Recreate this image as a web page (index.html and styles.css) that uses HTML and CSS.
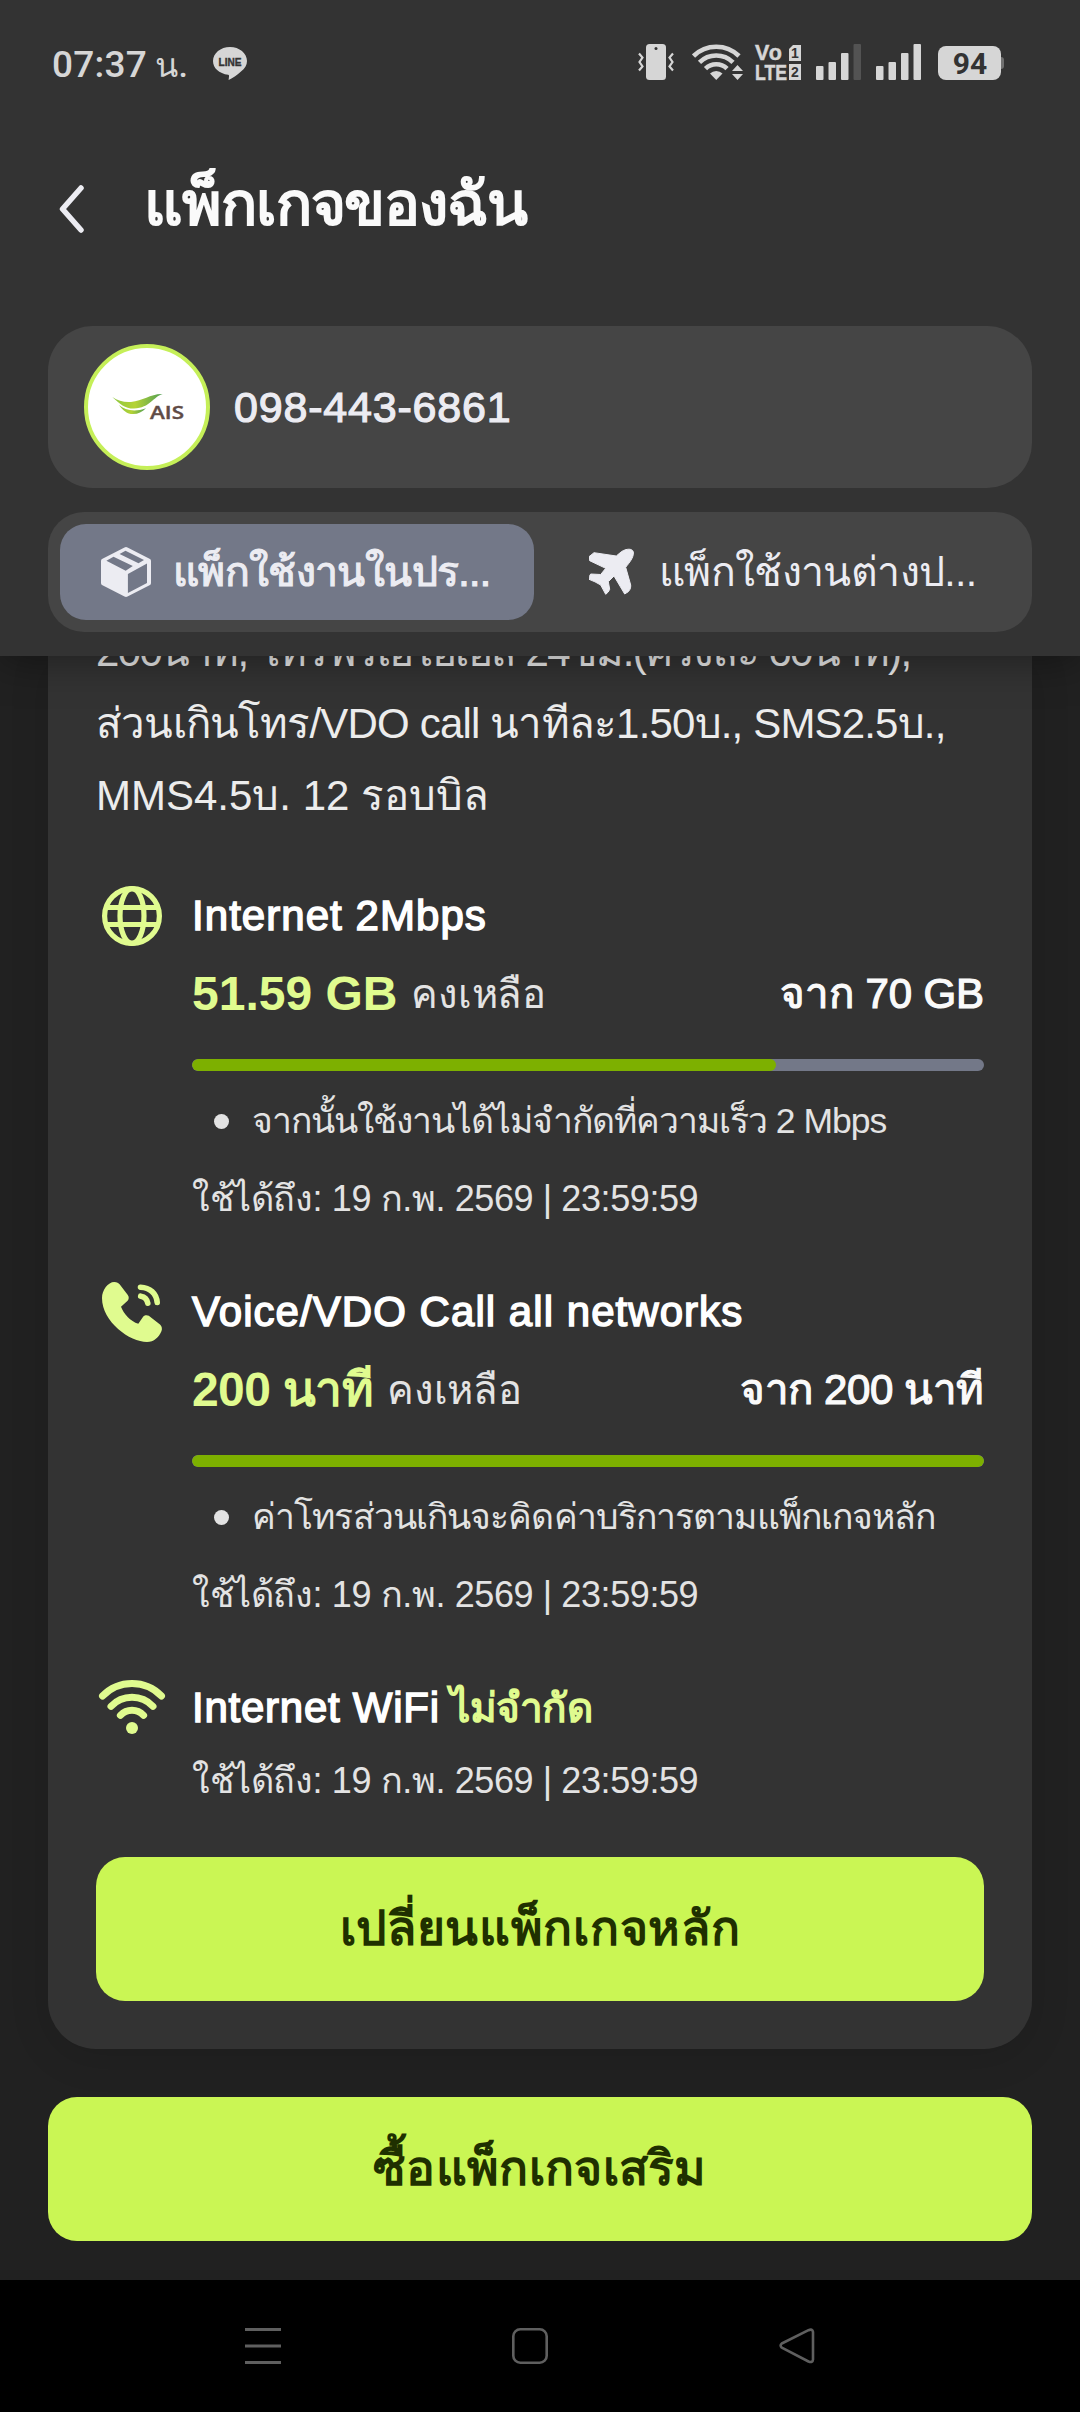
FILE: index.html
```html
<!DOCTYPE html>
<html lang="th">
<head>
<meta charset="utf-8">
<title>แพ็กเกจของฉัน</title>
<link rel="stylesheet" href="styles.css">
</head>
<body>
<div class="screen">
  <header class="header">
    <div class="status">
      <span class="clock">07:37 <span class="clock-unit">น.</span></span>
      <svg class="line-app" width="34" height="34" viewBox="0 0 34 34">
        <path d="M17 0C7.600 0 0 6.300 0 14c0 7 6 12.600 15.200 13.800.8.2.9.8.8 1.800L15.600 33c3.400-1.400 9-5 12.400-8.400C31.800 21.500 34 18 34 14 34 6.300 26.400 0 17 0z" fill="#d6d6d6"/>
        <text x="17" y="18.500" text-anchor="middle" textLength="23" lengthAdjust="spacingAndGlyphs" class="line-label">LINE</text>
      </svg>
      <div class="status-right">
        <svg width="36" height="36" viewBox="0 0 36 36" fill="none">
          <rect x="8" width="20" height="36" rx="3.500" fill="#d6d6d6"/>
          <circle cx="18" cy="4.500" r="1.500" fill="#333"/>
          <path d="M1 9.500l3.500 4L1.500 18l3 4.500L1 26.500M35 9.500l-3.500 4 3 4.500-3 4.500 3.500 4" stroke="#d6d6d6" stroke-width="2.200"/>
        </svg>
        <svg width="51" height="36" viewBox="0 0 51 36" fill="none">
          <g stroke="#d6d6d6" stroke-width="4.600">
            <path d="M1.500 12A32.500 32.500 0 0 1 47 12"/>
            <path d="M7.500 18.300A24 24 0 0 1 41 18.300"/>
            <path d="M13.500 24.600A15.300 15.300 0 0 1 35 24.600"/>
          </g>
          <path d="M18 29.500a9 9 0 0 1 12.500 0L24.250 36z" fill="#d6d6d6"/>
          <path d="M40 27l5.500-6 5.500 6zM40 30h11l-5.500 6z" fill="#d6d6d6"/>
        </svg>
        <svg class="volte-icon" width="46" height="36" viewBox="0 0 46 36">
          <text x="0" y="16" textLength="27" class="volte">Vo</text>
          <text x="0" y="35.500" textLength="32" lengthAdjust="spacingAndGlyphs" class="volte">LTE</text>
          <path d="M38 1h8v16H34V5zM34 20h12v16H34z" fill="#d6d6d6"/>
          <text x="40" y="14" class="volte-n">1</text>
          <text x="40" y="33" class="volte-n">2</text>
        </svg>
        <svg width="45" height="36" viewBox="0 0 45 36" fill="#d6d6d6">
          <rect y="22" width="7.500" height="14" rx="1"/><rect x="12.500" y="18" width="7.500" height="18" rx="1"/>
          <rect x="25" y="9" width="7.500" height="27" rx="1"/><rect x="37.500" width="7.500" height="36" rx="1" fill="#535353"/>
        </svg>
        <svg width="45" height="36" viewBox="0 0 45 36" fill="#d6d6d6">
          <rect y="22" width="7.500" height="14" rx="1"/><rect x="12.500" y="18" width="7.500" height="18" rx="1"/>
          <rect x="25" y="9" width="7.500" height="27" rx="1"/><rect x="37.500" width="7.500" height="36" rx="1"/>
        </svg>
        <svg width="66" height="36" viewBox="0 0 66 36">
          <rect x="58" y="13" width="8" height="12" rx="3" fill="#707070"/>
          <rect y="2" width="63" height="34" rx="8" fill="#d6d6d6"/>
          <text x="32" y="29.500" text-anchor="middle" class="battery">94</text>
        </svg>
      </div>
    </div>
    <div class="titlebar">
      <svg width="26" height="50" viewBox="0 0 26 50" fill="none" stroke="#ececf2" stroke-width="5.500" stroke-linecap="round" stroke-linejoin="round"><path d="M22 4L3.500 25 22 46"/></svg>
      <h1 class="title">แพ็กเกจของฉัน</h1>
    </div>
    <div class="number-card">
      <div class="avatar">
        <svg width="118" height="118" viewBox="4 4 118 118">
          <defs><linearGradient id="leaf"><stop offset="0" stop-color="#8cc63f"/><stop offset=".45" stop-color="#b5d335"/><stop offset="1" stop-color="#4f9e55"/></linearGradient></defs>
          <path d="M28.300 53C34 57 40 58.500 47 58c12-.8 20-8.500 31.700-7.900C70 52 66 64.300 50 64.600 41 64.700 36 60 28.300 53z" fill="url(#leaf)"/>
          <path d="M35 61c6 5 15 7.500 27 3.200C58 68 54 70.200 49 70.100 43 70 39 66.500 35 61z" fill="url(#leaf)"/>
          <text x="66" y="75.300" textLength="34" lengthAdjust="spacingAndGlyphs" class="ais">AIS</text>
        </svg>
      </div>
      <span class="number">098-443-6861</span>
    </div>
    <nav class="tabs">
      <div class="tab tab-active">
        <svg class="tab-icon" width="50" height="50" viewBox="0 0 50 50">
          <path d="M23.500.5q1.500-.8 3 0L49 12q1 .7 1 2v22q0 1.500-1 2L26.500 49.500q-1.500.8-3 0L1 38q-1-.7-1-2V14q0-1.300 1-2z" fill="#ececf2"/>
          <path d="M26.900 27L46 16.500V36L26.900 46zM24.500 3.800L43 13l-5.500 3.300L18.600 7zM12.500 9.700L31.800 19l-7.100 4.700L5.400 13.700z" fill="#737888"/>
        </svg>
        <span class="tab-text">แพ็กใช้งานในปร...</span>
      </div>
      <div class="tab">
        <svg class="tab-icon" width="50" height="50" viewBox="0 -2 50 50">
          <path d="M27.300 7C31 4 33 1.500 37 .6 41 -.4 44.500 .5 44.400 4c0 5-4 9.500-7.700 14.300L41.700 36c.3 3-1 5.500-2.400 6.700L35.700 45 25 27l-5.700 5.700 1.400 7.600q-1 3-4 5L11.700 36Q6 32.500 0 30.300 0 27 1.700 25l10 .5 5-6.200L.7 11.700Q-.5 9.500 0 7.700L5 3.700z" fill="#ececf2" stroke="#ececf2" stroke-linejoin="round"/>
        </svg>
        <span class="tab-text">แพ็กใช้งานต่างป...</span>
      </div>
    </nav>
  </header>

  <main class="content">
    <section class="card">
      <div class="desc">
        <div class="desc-1">200นาที, โทรฟรีเอไอเอส 24ชม.(ครั้งละ 60นาที),</div>
        <div class="desc-2">ส่วนเกินโทร/VDO call นาทีละ1.50บ., SMS2.5บ.,</div>
        <div>MMS4.5บ. 12 รอบบิล</div>
      </div>

      <article class="service">
        <svg class="service-icon" width="72" height="60" viewBox="0 0 72 60" fill="none" stroke="#e0fb8f" stroke-width="5.200">
          <circle cx="36" cy="30" r="27.400"/><ellipse cx="36" cy="30" rx="12" ry="27.400"/><path d="M9 21.500h54M9 38.500h54"/>
        </svg>
        <div class="service-body">
          <h2 class="service-name">Internet 2Mbps</h2>
          <div class="usage">
            <span class="left">51.59 GB</span><span class="remain">คงเหลือ</span><span class="total">จาก 70 GB</span>
          </div>
          <div class="bar"><div class="fill" style="width:73.7%"></div></div>
          <div class="note"><i class="dot"></i><span class="note-1">จากนั้นใช้งานได้ไม่จำกัดที่ความเร็ว 2 Mbps</span></div>
          <div class="valid">ใช้ได้ถึง: 19 ก.พ. 2569 | 23:59:59</div>
        </div>
      </article>

      <article class="service">
        <svg class="service-icon" width="72" height="60" viewBox="-6 0 72 60" fill="none">
          <path d="M12.300 0C15 0 16.500 1 17.800 2.600L25.800 13C27.200 15 27 17.200 25.600 18.800L19 24.700C21.500 31.500 28.500 39.500 36.300 41.700L41.300 34.600C42.700 33 45 32.700 46.800 33.800L58 42.500C60 44.500 60.500 47 59.300 49.500 57 55 52 60 45 60 28 60 0 40 0 16 0 8 6 0 12.300 0z" fill="#e0fb8f"/>
          <path d="M38.500 5.200C48 5.500 54.500 11.500 55.200 20.500M38.700 14.200C42.500 14.800 45.200 17.500 45.800 21.200" stroke="#e0fb8f" stroke-width="5.600" stroke-linecap="round"/>
        </svg>
        <div class="service-body">
          <h2 class="service-name">Voice/VDO Call all networks</h2>
          <div class="usage">
            <span class="left left-minutes">200 นาที</span><span class="remain">คงเหลือ</span><span class="total total-minutes">จาก 200 นาที</span>
          </div>
          <div class="bar"><div class="fill" style="width:100%"></div></div>
          <div class="note"><i class="dot"></i><span class="note-2">ค่าโทรส่วนเกินจะคิดค่าบริการตามแพ็กเกจหลัก</span></div>
          <div class="valid">ใช้ได้ถึง: 19 ก.พ. 2569 | 23:59:59</div>
        </div>
      </article>

      <article class="service service-short">
        <svg class="service-icon" width="72" height="60" viewBox="0 0 72 60" fill="none" stroke="#e0fb8f" stroke-width="7" stroke-linecap="round">
          <path d="M6.500 18A41 41 0 0 1 65.500 18M15 28.300A29 29 0 0 1 57 28.300M24.400 37.300A16 16 0 0 1 47.600 37.300"/>
          <circle cx="36" cy="50" r="6" fill="#e0fb8f" stroke="none"/>
        </svg>
        <div class="service-body">
          <h2 class="service-name name-wifi">Internet WiFi <span class="unlimited">ไม่จำกัด</span></h2>
          <div class="valid valid-only">ใช้ได้ถึง: 19 ก.พ. 2569 | 23:59:59</div>
        </div>
      </article>

      <button class="button button-change">เปลี่ยนแพ็กเกจหลัก</button>
    </section>
    <button class="button button-buy">ซื้อแพ็กเกจเสริม</button>
  </main>

  <footer class="navbar">
    <svg width="36" height="36" viewBox="0 0 36 36" stroke="#5f5f5f" stroke-width="3"><path d="M0 1.500h36M0 18h36M0 34.500h36"/></svg>
    <svg width="36" height="36" viewBox="0 0 36 36" fill="none" stroke="#5f5f5f" stroke-width="2.600"><rect x="1.300" y="1.300" width="33.400" height="33.400" rx="7"/></svg>
    <svg width="36" height="36" viewBox="0 0 36 36" fill="none" stroke="#5f5f5f" stroke-width="2.600" stroke-linejoin="round"><path d="M29.500 2.200L2.800 15.500q-2.400 2 0 4.200L29.500 33.500q4.300 1.500 4.500-2V4q-.5-3.500-4.500-1.800z"/></svg>
  </footer>
</div>
</body>
</html>
```
FILE: styles.css
```css
* { box-sizing: border-box; margin: 0; }
body { background: #212121; font-family: "Liberation Sans", sans-serif; font-size: 42px; color: #ececec; }
.screen { width: 1080px; height: 2412px; display: flex; flex-direction: column; overflow: hidden; }
svg { display: block; flex: none; }

.header { position: relative; z-index: 1; height: 656px; flex: none; background: #333; padding: 0 48px; box-shadow: 0 4px 40px rgba(0, 0, 0, .4); }
.status { display: flex; align-items: flex-start; height: 148px; padding-top: 44px; }
.clock { width: 165px; padding-left: 4px; font: 500 37px/42px Roboto, "Liberation Sans", sans-serif; letter-spacing: .2px; color: #d6d6d6; white-space: nowrap; }
.clock-unit { font-size: 34px; margin-left: -1px; }
.line-app { margin-top: 3px; }
.line-label { font: 700 11px "Liberation Sans", sans-serif; fill: #333; stroke: #333; stroke-width: .4px; }
.status-right { display: flex; margin-left: 391px; }
.status-right svg:nth-child(2) { margin-left: 18px; }
.status-right svg:nth-child(3) { margin-left: 12px; }
.status-right svg:nth-child(n+4) { margin-left: 15px; }
.status-right svg:nth-child(6) { margin-left: 17px; }
.volte-icon { overflow: visible; }
.volte { font: 700 21.500px "Liberation Sans", sans-serif; fill: #d6d6d6; stroke: #d6d6d6; stroke-width: .5px; }
.volte-n { font: 700 14px "Liberation Sans", sans-serif; fill: #333; text-anchor: middle; }
.battery { font: 700 30px Roboto, sans-serif; fill: #333; }

.titlebar { display: flex; align-items: center; height: 178px; gap: 59px; padding: 0 0 56px 11px; }
.title { padding-bottom: 8px; font-size: 60px; font-weight: 400; line-height: 92px; letter-spacing: -1.100px; color: #fafafa; -webkit-text-stroke: 2.200px #fafafa; white-space: nowrap; }

.number-card { display: flex; align-items: center; gap: 24px; height: 162px; padding-left: 36px; border-radius: 45px; background: #454545; }
.avatar { width: 126px; height: 126px; flex: none; border: 4px solid #c5ef58; border-radius: 50%; background: #fff; }
.ais { font: 600 18.500px "Open Sans", sans-serif; fill: #5f4b46; stroke: #5f4b46; stroke-width: .4px; }
.number { font-size: 43px; letter-spacing: .8px; color: #ececf2; -webkit-text-stroke: 1.200px #ececf2; }

.tabs { display: flex; height: 120px; margin-top: 24px; padding: 12px; border-radius: 36px; background: #454545; }
.tab { display: flex; align-items: center; width: 474px; height: 96px; padding-left: 41px; gap: 22px; border-radius: 26px; color: #ececf2; }
.tab + .tab { padding-left: 55px; gap: 20px; }
.tab-active { background: #737888; }
.tab-text { font-size: 41px; line-height: 60px; letter-spacing: -.65px; white-space: nowrap; }
.tab-active .tab-text { -webkit-text-stroke: 1.200px #ececf2; }

.content { flex: 1; min-height: 0; padding: 0 48px; }
.card { display: flex; flex-direction: column; height: 1393px; padding: 0 48px; border-radius: 0 0 48px 48px; background: #333; box-shadow: 0 8px 40px rgba(0, 0, 0, .12); }
.desc { height: 270.500px; flex: none; margin-top: -40.500px; line-height: 72px; white-space: nowrap; }
.desc-1 { letter-spacing: -1.600px; }
.desc-2 { letter-spacing: -.83px; }

.service { display: flex; gap: 24px; height: 396px; flex: none; }
.service-short { height: 179px; }
.service-body { flex: 1; }
.service-name { font-size: 42px; font-weight: 400; line-height: 60px; letter-spacing: 1.050px; color: #fff; -webkit-text-stroke: 1.500px; white-space: nowrap; }
.name-wifi { letter-spacing: .75px; }
.usage { display: flex; align-items: center; height: 72px; margin-top: 12px; line-height: 72px; white-space: nowrap; }
.left { font-size: 48px; font-weight: 700; color: #e0fb8f; }
.left-minutes { letter-spacing: -.6px; }
.remain { margin-left: 14px; font-size: 40px; letter-spacing: -.3px; color: #e3e3e3; }
.total { margin-left: auto; letter-spacing: -.1px; color: #fafafa; -webkit-text-stroke: 1.200px #fafafa; }
.total-minutes { letter-spacing: -.4px; }
.bar { height: 12px; margin-top: 29px; border-radius: 6px; background: #737888; overflow: hidden; }
.fill { height: 12px; border-radius: 6px; background: #7db000; }
.note { display: flex; align-items: center; height: 54px; margin-top: 23px; padding-left: 22px; font-size: 35.500px; line-height: 54px; letter-spacing: -.9px; color: #e3e3e3; white-space: nowrap; }
.note-1 { letter-spacing: -1px; }
.dot { width: 15px; height: 15px; margin-right: 23px; border-radius: 50%; background: #e3e3e3; }
.valid { height: 54px; margin-top: 24px; font-size: 36px; line-height: 54px; letter-spacing: -.4px; color: #e3e3e3; white-space: nowrap; }
.valid-only { margin-top: 16px; }
.unlimited { font-size: 40.500px; color: #e0fb8f; letter-spacing: -.6px; margin-left: -2px; }

.button { display: block; width: 100%; height: 144px; flex: none; padding: 0; border: 0; border-radius: 29px; background: #caf654; color: #1f3000; font: 700 48px/72px "Liberation Sans", sans-serif; letter-spacing: .3px; text-align: center; }
.button-change { letter-spacing: .7px; }
.button-buy { margin-top: 48px; }

.navbar { display: flex; height: 132px; flex: none; padding: 48px 0 0 245px; gap: 231px; background: #000; }
```
